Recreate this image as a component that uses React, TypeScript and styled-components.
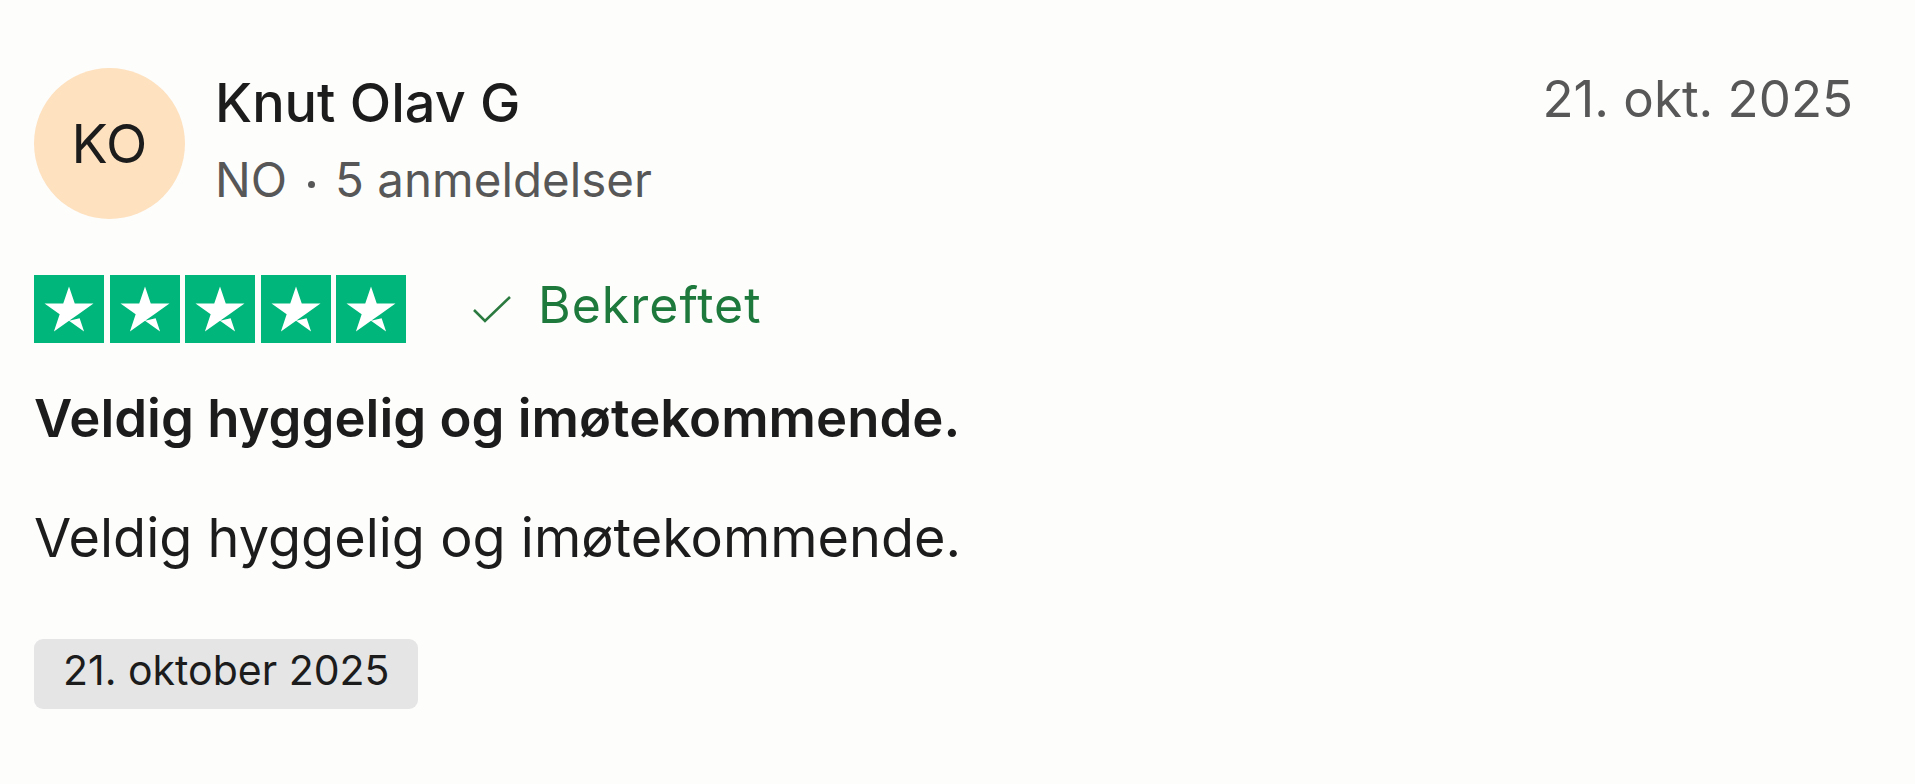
import React from "react";
import styled, { createGlobalStyle } from "styled-components";

const Global = createGlobalStyle`
  html, body { margin: 0; padding: 0; background: #fdfdfc; }
  body { font-family: Inter, "Noto Sans", "Liberation Sans", sans-serif; color: #1c1c1c; }
`;

const Card = styled.article`
  padding: 68px 62px 0 34px;
  min-height: 784px;
  box-sizing: border-box;
  background: #fdfdfc;
`;

const Header = styled.header`
  display: flex;
  align-items: flex-start;
`;

const Avatar = styled.div`
  width: 151px;
  height: 151px;
  border-radius: 50%;
  background: #fee1bf;
  display: flex;
  align-items: center;
  justify-content: center;
  font-size: 54px;
  color: #1c1c1c;
  flex-shrink: 0;
`;

const Info = styled.div`
  display: flex;
  flex-direction: column;
  margin-left: 30px;
  padding-top: 5px;
  flex: 1;
`;

const Name = styled.div`
  font-size: 54px;
  line-height: 60px;
  color: #1c1c1c;
  font-weight: 500;
`;

const Meta = styled.div`
  font-size: 47.5px;
  line-height: 56px;
  margin-top: 19px;
  color: #575757;
`;

const Dot = styled.span`
  display: inline-block;
  width: 7px;
  height: 7px;
  border-radius: 50%;
  background: #575757;
  margin: 0 20px 0 21px;
  vertical-align: middle;
`;

const DateText = styled.time`
  font-size: 51px;
  line-height: 60px;
  margin-top: 1px;
  color: #575757;
`;

const RatingRow = styled.div`
  display: flex;
  align-items: flex-start;
  margin-top: 56px;
`;

const Stars = styled.div`
  display: flex;
  gap: 5.5px;
`;

const StarBox = styled.svg`
  width: 70px;
  height: 68px;
  display: block;
`;

const Verified = styled.div`
  display: flex;
  align-items: flex-start;
  margin-left: 66px;
  margin-top: 2px;
  gap: 26px;
  color: #1d7a3c;
  font-size: 50px;
  letter-spacing: 1px;
  line-height: 56px;
`;

const Check = styled.svg`
  width: 40px;
  height: 28px;
  margin-top: 18px;
  display: block;
`;

const Title = styled.h2`
  margin: 43px 0 0;
  font-weight: 600;
  font-size: 52.7px;
  line-height: 64px;
  color: #1c1c1c;
`;

const Body = styled.p`
  margin: 52px 0 0;
  font-size: 54px;
  line-height: 72px;
  color: #1c1c1c;
`;

const Badge = styled.div`
  display: inline-block;
  margin-top: 65px;
  height: 70px;
  box-sizing: border-box;
  padding: 3px 29px 11px;
  border-radius: 9px;
  background: #e5e5e5;
  font-size: 41px;
  line-height: 56px;
  color: #1c1c1c;
`;

const Star = () => (
  <StarBox viewBox="0 0 96 96" preserveAspectRatio="none">
    <rect width="96" height="96" fill="#00b67a" />
    <path
      fill="#fff"
      d="M48 64.7L62.6 61l6.1 18.8zm33.6-24.3H55.9L48 16.2l-7.9 24.2H14.4l20.8 15-7.9 24.2 20.8-15 12.8-9.2 20.7-15z"
    />
  </StarBox>
);

export default function App() {
  return (
    <>
      <Global />
      <Card>
        <Header>
          <Avatar>KO</Avatar>
          <Info>
            <Name>Knut Olav G</Name>
            <Meta>
              NO<Dot />5 anmeldelser
            </Meta>
          </Info>
          <DateText>21. okt. 2025</DateText>
        </Header>
        <RatingRow>
          <Stars>
            {[0, 1, 2, 3, 4].map((i) => (
              <Star key={i} />
            ))}
          </Stars>
          <Verified>
            <Check viewBox="0 0 40 28" fill="none">
              <path d="M2 15 L13 26 L38 2" stroke="#2b7a3f" strokeWidth="2.6" />
            </Check>
            <span>Bekreftet</span>
          </Verified>
        </RatingRow>
        <Title>Veldig hyggelig og imøtekommende.</Title>
        <Body>Veldig hyggelig og imøtekommende.</Body>
        <div>
          <Badge>21. oktober 2025</Badge>
        </div>
      </Card>
    </>
  );
}
